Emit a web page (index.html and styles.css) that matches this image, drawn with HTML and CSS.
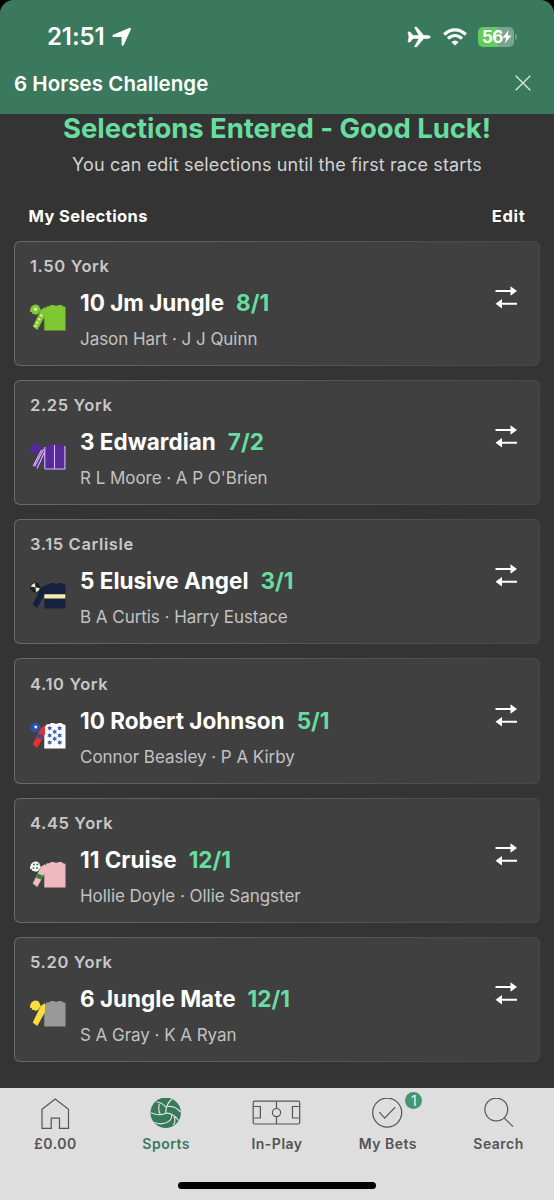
FILE: index.html
```html
<!DOCTYPE html>
<html lang="en">
<head>
<meta charset="utf-8">
<title>6 Horses Challenge</title>
<link rel="stylesheet" href="styles.css">
</head>
<body>
<svg class="defs" width="0" height="0" aria-hidden="true">
  <symbol id="swap" viewBox="0 0 22 24"><path d="M.5 4h15V.3L22 5l-6.500 4.700V6H.5zM22 16.700H7V13L.5 17.700 7 22.400V18.700H22z" fill="#fff"/></symbol>
  <symbol id="jacket" viewBox="0 0 36 27"><path d="M14.3 26.5V6L16.5 2.5 20 2l1-1h3l1 .7h2.500l1-.7h3l1 1 3 1V26.500z"/></symbol>
  <symbol id="sleeve" viewBox="0 0 36 27"><path d="M2.700 22.500 10.800 6 15 3v9L7.300 26z"/></symbol>
  <symbol id="cap" viewBox="0 0 36 27"><path d="M5.500.600Q9.300 .6 9.900 4.300L10.900 6 9.700 7.500Q8.700 10.500 5.500 10.800L4 10.100H2.500L1.500 8H.3L-.2 6.500.3 5.300Q1 1.300 5.500.6z"/></symbol>
</svg>
<div class="phone">
  <header class="header">
    <div class="status">
      <div class="clock"><span>21:51</span><svg width="20" height="20" viewBox="0 0 20 20"><path d="M17.500 1.500 1.300 8.400Q.7 9.200 1.500 9.500H9.500Q10.200 9.600 10.200 10.500V17.500Q10.600 18.500 11.200 17.700L18.300 2.300Q18.500 1.200 17.500 1.500z" fill="#fff" stroke="#fff" stroke-width="1.200" stroke-linejoin="round"/></svg></div>
      <div class="signals">
        <svg width="24" height="22" viewBox="0 0 24 22"><path d="M1 6h2l3 3.500h6L7.500 1.200h2.200l7 8.300h4.300q2.300.4 2.300 1.500T21 12.500h-4.300l-7 8.300H7.500L12 12.500H6L3 16H1l1-5z" fill="#fff" stroke="#fff" stroke-width=".6" stroke-linejoin="round"/></svg>
        <svg class="wifi" width="24" height="18" viewBox="0 0 24 18"><g fill="none" stroke="#fff" stroke-width="3.200"><path d="M1.200 6.500Q6 1.800 12 1.800T22.800 6.500"/><path d="M5 10.600Q8.200 7.500 12 7.500T19 10.600"/></g><path d="M8.400 14Q12 11 15.600 14L12 17.500z" fill="#fff"/></svg>
        <span class="battery"><b>56</b><svg width="10" height="14" viewBox="0 0 10 14"><path d="M6.700 0 .5 7.800h3.700L2.800 13.500 9.500 5.600H5.700z" fill="#fff"/></svg></span><i class="battery-tip"></i>
      </div>
    </div>
    <div class="titlebar"><h1>6 Horses Challenge</h1><svg width="16" height="16" viewBox="0 0 16 16"><path d="M.7.700 15.300 15.300M15.300.7.700 15.300" stroke="#d5efe2" stroke-width="1.300"/></svg></div>
  </header>
  <main class="main">
    <h2>Selections Entered - Good Luck!</h2>
    <p class="intro">You can edit selections until the first race starts</p>
    <div class="list-head"><span class="mine">My Selections</span><span class="edit">Edit</span></div>
    <div class="cards">
      <section class="card">
        <div class="race">1.50 York</div>
        <svg class="silk" viewBox="0 0 36 27"><g fill="#7fc834"><use href="#jacket"/><use href="#sleeve"/><use href="#cap"/></g><g fill="#d6f5a8"><circle cx="5.500" cy="5.200" r="1.800"/><circle cx="11.300" cy="11.500" r="1.300"/><circle cx="9.200" cy="15.200" r="1.200"/><circle cx="7.300" cy="18.700" r="1.200"/><circle cx="5.700" cy="22" r="1.200"/></g></svg>
        <div class="runner"><div class="horse"><b>10 Jm Jungle</b><em>8/1</em></div><div class="people">Jason Hart · J J Quinn</div></div>
        <svg class="swap"><use href="#swap"/></svg>
      </section>
      <section class="card">
        <div class="race">2.25 York</div>
        <svg class="silk" viewBox="0 0 36 27"><g fill="#57299a"><use href="#jacket"/><use href="#sleeve"/><use href="#cap"/></g><path d="M14.800 25.900V4M24.500 2v24M34.900 3v23H14.800M13.800 6 4.600 23.500M15 8 7 25.500M11.500 7 3.200 23" fill="none" stroke="#d5bdeb" stroke-width="1.100"/></svg>
        <div class="runner"><div class="horse"><b>3 Edwardian</b><em>7/2</em></div><div class="people">R L Moore · A P O'Brien</div></div>
        <svg class="swap"><use href="#swap"/></svg>
      </section>
      <section class="card">
        <div class="race">3.15 Carlisle</div>
        <svg class="silk" viewBox="0 0 36 27"><g fill="#15213f"><use href="#jacket"/><use href="#sleeve"/><use href="#cap"/></g><path d="M14.300 12.200h21v4.400h-21zM5.500 5.400.7 4.500Q2 1.500 5 1zM5.500 5.400l4.300.6Q9 9.500 6 10z" fill="#f5edad"/></svg>
        <div class="runner"><div class="horse"><b>5 Elusive Angel</b><em>3/1</em></div><div class="people">B A Curtis · Harry Eustace</div></div>
        <svg class="swap"><use href="#swap"/></svg>
      </section>
      <section class="card">
        <div class="race">4.10 York</div>
        <svg class="silk" viewBox="0 0 36 27"><use href="#jacket" fill="#fff"/><use href="#sleeve" fill="#e5332c"/><use href="#cap" fill="#2854a5"/><path d="m8.500 11.500 4.700 1.800-2 4-4.900-1.800z" fill="#2854a5"/><path d="m5.800 3 .6 1.300 1.400.2-1 .9.200 1.400-1.200-.7-1.200.7.200-1.400-1-.9 1.400-.2z" fill="#fff"/><g fill="#3f65b5"><path id="star" d="m19.700 3.700.7 1.300 1.600-.1-.9 1.300.9 1.400-1.600-.1-.7 1.300-.8-1.300-1.500.1.800-1.400-.8-1.300 1.500.1z"/><use href="#star" x="10"/><use href="#star" x="5" y="3.600"/><use href="#star" y="7.200"/><use href="#star" x="10" y="7.200"/><use href="#star" x="5" y="10.600"/><use href="#star" y="14.200"/><use href="#star" x="10" y="14.200"/></g></svg>
        <div class="runner"><div class="horse"><b>10 Robert Johnson</b><em>5/1</em></div><div class="people">Connor Beasley · P A Kirby</div></div>
        <svg class="swap"><use href="#swap"/></svg>
      </section>
      <section class="card">
        <div class="race">4.45 York</div>
        <svg class="silk" viewBox="0 0 36 27"><g fill="#f0b9bf"><use href="#jacket"/><use href="#sleeve"/></g><use href="#cap" fill="#f5f8f3"/><path d="m7.800 12.500 5.800 2.200-2 4.100-5.900-2.200z" fill="#35843e"/><g fill="#35843e"><circle cx="4" cy="3.500" r="1"/><circle cx="7.300" cy="3.500" r="1"/><circle cx="3.500" cy="7" r="1"/><circle cx="7" cy="7" r="1"/></g></svg>
        <div class="runner"><div class="horse"><b>11 Cruise</b><em>12/1</em></div><div class="people">Hollie Doyle · Ollie Sangster</div></div>
        <svg class="swap"><use href="#swap"/></svg>
      </section>
      <section class="card">
        <div class="race">5.20 York</div>
        <svg class="silk" viewBox="0 0 36 27"><use href="#jacket" fill="#999"/><g fill="#fbdc43"><use href="#sleeve"/><use href="#cap"/></g></svg>
        <div class="runner"><div class="horse"><b>6 Jungle Mate</b><em>12/1</em></div><div class="people">S A Gray · K A Ryan</div></div>
        <svg class="swap"><use href="#swap"/></svg>
      </section>
    </div>
  </main>
  <footer class="footer">
    <nav class="tabs">
      <div class="tab"><svg width="30" height="32" viewBox="0 0 30 32"><path d="M2 11.300 15.200 1 28.500 11.300V30.400H19.500V20.200H11.200V30.400H2z" fill="none" stroke="#555" stroke-width="1.200"/></svg><span>£0.00</span></div>
      <div class="tab active"><svg width="32" height="32" viewBox="0 0 32 32"><circle cx="15.700" cy="14.700" r="15.200" fill="#377a5b"/><g fill="none" stroke="#dedede" stroke-width="1.200"><path d="M15.700 15.200Q15.500 6.500 22 1M15.700 15.200Q23 14.500 28.500 22.500M15.700 15.200Q9.500 18.500 1 14.800M15.700 9Q12 4.500 6.500 4M17 8.500Q25 7.500 30.500 14M21.500 16.500Q22.500 20.500 18.500 23.500Q12 27.500 4.500 24.500M10.500 17Q7 10 10 4.500M24 18.500Q26 23 23.500 27"/></g></svg><span>Sports</span></div>
      <div class="tab"><svg width="50" height="32" viewBox="0 0 50 32"><g fill="none" stroke="#555" stroke-width="1.200"><rect x="1.200" y="3.200" width="46.500" height="22.800" rx="1.500"/><path d="M1.200 8.500h7.200v11.500H1.200M47.700 8.500H40.500v11.500H47.700M24.500 3.200v7.300M24.500 18.700v7.300"/><circle cx="24.500" cy="14.600" r="4.100"/></g></svg><span>In-Play</span></div>
      <div class="tab bets"><svg width="32" height="32" viewBox="0 0 32 32"><g fill="none" stroke="#555" stroke-width="1.200"><circle cx="15.200" cy="14.600" r="14.500"/><path d="m7.400 14.200 5.300 6L23.200 9.100"/></g></svg><span>My Bets</span><i class="badge">1</i></div>
      <div class="tab"><svg width="30" height="32" viewBox="0 0 30 32"><g fill="none" stroke="#555" stroke-width="1.200"><circle cx="12.300" cy="11.500" r="11.400"/><path d="m20.200 19.900 8.700 8.800"/></g></svg><span>Search</span></div>
    </nav>
    <div class="home-bar"></div>
  </footer>
</div>
</body>
</html>
```
FILE: styles.css
```css
* { box-sizing: border-box; }
body { margin: 0; background: #000; font-family: Inter, "Liberation Sans", sans-serif; }
h1, h2, p { margin: 0; }
svg { display: block; flex: none; }
.defs { position: absolute; }
.phone { width: 554px; height: 1200px; display: flex; flex-direction: column; overflow: hidden; background: #343434; border-radius: 14px 14px 0 0; }
.header { height: 113.500px; background: #3a795d; color: #fff; }
.status { height: 62px; padding: 24px 37px 0 47px; display: flex; justify-content: space-between; align-items: flex-start; }
.clock { display: flex; gap: 7px; font-size: 24px; font-weight: 600; line-height: 26px; letter-spacing: -.1px; }
.clock span { width: 58px; white-space: nowrap; }
.clock svg { margin-top: 3px; }
.signals { display: flex; align-items: center; height: 26px; }
.wifi { margin-left: 12px; }
.battery { width: 36px; height: 20px; margin-left: 11px; margin-right: 1px; border-radius: 5px; padding: 0 2px 0 4px; display: flex; align-items: center; background: linear-gradient(90deg, #63cc5c 56%, #77a690 56%); }
.battery b { width: 20px; font-size: 17px; font-weight: 700; line-height: 20px; letter-spacing: -.7px; }
.battery-tip { width: 2px; height: 6px; border-radius: 0 2px 2px 0; background: #699d85; }
.titlebar { display: flex; justify-content: space-between; padding: 8px 23px 0 14px; }
.titlebar h1 { font-size: 20.500px; font-weight: 600; line-height: 27px; letter-spacing: .03px; }
.titlebar svg { margin-top: 5px; }
.main { height: 974px; padding: 0 14px; }
h2 { height: 34px; text-align: center; color: #67dda0; font-size: 27.500px; line-height: 29px; font-weight: 700; white-space: nowrap; letter-spacing: -.08px; }
.intro { height: 34px; text-align: center; color: #d2d2d2; font-size: 18px; line-height: 34px; white-space: nowrap; letter-spacing: .12px; }
.list-head { height: 59.100px; padding: 21px 14.500px 0; display: flex; justify-content: space-between; color: #fff; font-size: 16.500px; line-height: 26px; font-weight: 700; letter-spacing: .4px; }
.edit { letter-spacing: .7px; }
.cards { display: flex; flex-direction: column; gap: 14px; }
.card { height: 125.300px; padding: 13.300px 22px 0 15px; border: 1px solid transparent; border-radius: 6px; background: linear-gradient(#404040, #404040) padding-box, linear-gradient(100deg, #6b6b6b, #464646) border-box; display: grid; grid-template-columns: 50px 1fr 22px; grid-template-rows: 23px 75px; }
.race { grid-column: 1 / 4; color: #c8c8c8; font-size: 16.500px; line-height: 23px; font-weight: 600; letter-spacing: .63px; }
.silk { width: 36px; height: 27px; margin-top: 26px; overflow: visible; }
.runner { white-space: nowrap; }
.horse { height: 38px; padding-top: 5px; display: flex; gap: 12px; font-size: 22.500px; line-height: 39px; font-weight: 700; color: #fff; letter-spacing: 0; }
.horse b { font-weight: inherit; }
.horse em { color: #67dda0; font-style: normal; }
.people { height: 35px; padding-top: 6px; color: #c2c2c2; font-size: 17px; line-height: 35px; letter-spacing: -.04px; }
.swap { width: 22px; height: 24px; margin-top: 8px; }
.footer { flex: 1; background: #dedede; padding-top: 10px; }
.tabs { height: 86px; display: grid; grid-template-columns: repeat(5, 1fr); }
.tab { position: relative; display: flex; flex-direction: column; align-items: center; color: #545454; font-size: 14px; line-height: 18px; font-weight: 600; letter-spacing: .5px; }
.tab span { margin-top: 5px; }
.active { color: #377a5b; }
.badge { position: absolute; left: 73px; top: -6px; width: 17px; height: 17px; border-radius: 50%; background: #429672; color: #e7f5ee; font-style: normal; font-weight: 400; line-height: 17px; text-align: center; letter-spacing: 0; }
.home-bar { width: 198px; height: 7px; margin: -2px auto 0; border-radius: 4px; background: #000; }
```
